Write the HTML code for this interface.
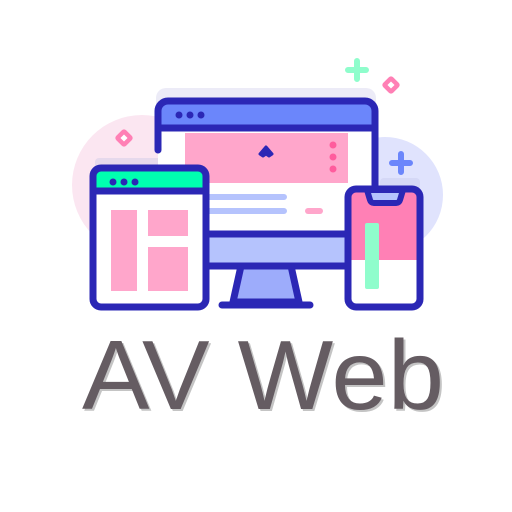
<!DOCTYPE html>
<html><head><style>html,body{margin:0;padding:0;background:#fff;width:512px;height:512px;overflow:hidden}</style></head>
<body>
<svg width="512" height="512" viewBox="0 0 512 512" xmlns="http://www.w3.org/2000/svg">
<circle cx="142" cy="185" r="70" fill="#fbe6f1"/>
<circle cx="385" cy="195" r="58" fill="#e0e3fd"/>
<rect x="156" y="88" width="220" height="40" rx="10" fill="#ecebf7"/>
<rect x="95" y="158" width="70" height="12" rx="4" fill="#e6d9ec"/>
<rect x="380" y="178" width="40" height="12" rx="4" fill="#d5d8f6"/>
<path d="M357 61v18M348 70h18" stroke="#8ffdcc" stroke-width="6" stroke-linecap="round"/>
<rect x="384" y="78" width="14" height="14" rx="3" fill="#ff80b5" transform="rotate(45 391 85)"/>
<rect x="388.5" y="82.5" width="5" height="5" fill="#fff" transform="rotate(45 391 85)"/>
<rect x="117" y="131" width="14" height="14" rx="3" fill="#ff80b5" transform="rotate(45 124 138)"/>
<rect x="121.5" y="135.5" width="5" height="5" fill="#fff" transform="rotate(45 124 138)"/>
<path d="M401 154v18M392 163h18" stroke="#6b86fb" stroke-width="6" stroke-linecap="round"/>
<rect x="158" y="101" width="217" height="165" rx="10" fill="#fff"/>
<path d="M158 128V111a10 10 0 0 1 10-10h197a10 10 0 0 1 10 10v17z" fill="#6b86fb"/>
<rect x="158" y="234" width="217" height="32" fill="#b5c3fd"/>
<rect x="185" y="133" width="163" height="50" fill="#ffa6cb"/>
<path d="M260 154l6-7 6 7-3 2-3-2-3 2z" fill="#2b27b5" stroke="#2b27b5" stroke-width="3" stroke-linejoin="round"/>
<circle cx="333" cy="145" r="3.5" fill="#ff5c9d"/><circle cx="333" cy="157" r="3.5" fill="#ff5c9d"/><circle cx="333" cy="169" r="3.5" fill="#ff5c9d"/>
<path d="M206 197h78M206 211h78" stroke="#b5c3fd" stroke-width="6" stroke-linecap="round"/>
<path d="M308 211h12" stroke="#ffa6cb" stroke-width="6" stroke-linecap="round"/>
<path d="M158 150V111a10 10 0 0 1 10-10h197a10 10 0 0 1 10 10v76M158 128h217M158 234h190M158 266h190" stroke="#2b27b5" stroke-width="7" fill="none" stroke-linecap="round"/>
<circle cx="179" cy="115" r="3.5" fill="#2b27b5"/><circle cx="190" cy="115" r="3.5" fill="#2b27b5"/><circle cx="201" cy="115" r="3.5" fill="#2b27b5"/>
<path d="M241 266h50l8 36h-66z" fill="#9dacfb" stroke="#2b27b5" stroke-width="7" stroke-linejoin="round"/>
<path d="M222 305h88" stroke="#2b27b5" stroke-width="7" stroke-linecap="round"/>
<rect x="93" y="168" width="113" height="139" rx="8" fill="#fff"/>
<path d="M93 190v-14a8 8 0 0 1 8-8h97a8 8 0 0 1 8 8v14z" fill="#00ffb0"/>
<rect x="111" y="210" width="26" height="81" fill="#ffa6cb"/>
<rect x="148" y="210" width="40" height="26" fill="#ffa6cb"/>
<rect x="148" y="247" width="40" height="44" fill="#ffa6cb"/>
<rect x="93" y="168" width="113" height="139" rx="8" fill="none" stroke="#2b27b5" stroke-width="7"/>
<path d="M93 191h113" stroke="#2b27b5" stroke-width="7"/>
<circle cx="113" cy="182" r="3.5" fill="#2b27b5"/><circle cx="124" cy="182" r="3.5" fill="#2b27b5"/><circle cx="135" cy="182" r="3.5" fill="#2b27b5"/>
<path d="M348 260v-64a8 8 0 0 1 8-8h56a8 8 0 0 1 8 8v64z" fill="#ff80b5"/>
<path d="M348 260h72v40a8 8 0 0 1-8 8h-56a8 8 0 0 1-8-8z" fill="#fff"/>
<rect x="365" y="223" width="14" height="66" rx="2" fill="#8ffdcc"/>
<path d="M367 190l3 10a4 4 0 0 0 4 3h22a4 4 0 0 0 4-3l3-10z" fill="#b5c3fd" stroke="#2b27b5" stroke-width="6" stroke-linejoin="round"/>
<rect x="348" y="189" width="72" height="118" rx="8" fill="none" stroke="#2b27b5" stroke-width="7"/>
<text x="84" y="411" font-family="Liberation Sans, sans-serif" font-size="98" fill="#c4c4c4" textLength="362" lengthAdjust="spacingAndGlyphs">AV Web</text>
<text x="82" y="409" font-family="Liberation Sans, sans-serif" font-size="98" fill="#655c62" textLength="362" lengthAdjust="spacingAndGlyphs">AV Web</text>
</svg>
</body></html>
